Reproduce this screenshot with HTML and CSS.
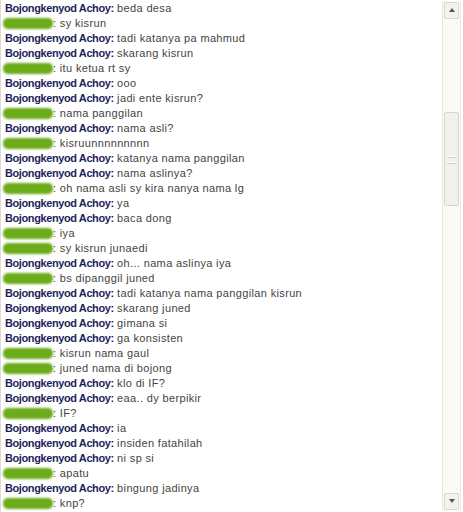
FILE: index.html
```html
<!DOCTYPE html>
<html lang="id">
<head>
  <meta charset="UTF-8">
  <title>Chat</title>
  <link rel="stylesheet" href="styles.css">
</head>
<body>
  <div class="chatbox">
    <div class="log">
      <div class="line"><b class="nick">Bojongkenyod Achoy:</b> beda desa</div>
      <div class="line"><span class="blur"></span>: sy kisrun</div>
      <div class="line"><b class="nick">Bojongkenyod Achoy:</b> tadi katanya pa mahmud</div>
      <div class="line"><b class="nick">Bojongkenyod Achoy:</b> skarang kisrun</div>
      <div class="line"><span class="blur"></span>: itu ketua rt sy</div>
      <div class="line"><b class="nick">Bojongkenyod Achoy:</b> ooo</div>
      <div class="line"><b class="nick">Bojongkenyod Achoy:</b> jadi ente kisrun?</div>
      <div class="line"><span class="blur"></span>: nama panggilan</div>
      <div class="line"><b class="nick">Bojongkenyod Achoy:</b> nama asli?</div>
      <div class="line"><span class="blur"></span>: kisruunnnnnnnnn</div>
      <div class="line"><b class="nick">Bojongkenyod Achoy:</b> katanya nama panggilan</div>
      <div class="line"><b class="nick">Bojongkenyod Achoy:</b> nama aslinya?</div>
      <div class="line"><span class="blur"></span>: oh nama asli sy kira nanya nama lg</div>
      <div class="line"><b class="nick">Bojongkenyod Achoy:</b> ya</div>
      <div class="line"><b class="nick">Bojongkenyod Achoy:</b> baca dong</div>
      <div class="line"><span class="blur"></span>: iya</div>
      <div class="line"><span class="blur"></span>: sy kisrun junaedi</div>
      <div class="line"><b class="nick">Bojongkenyod Achoy:</b> oh... nama aslinya iya</div>
      <div class="line"><span class="blur"></span>: bs dipanggil juned</div>
      <div class="line"><b class="nick">Bojongkenyod Achoy:</b> tadi katanya nama panggilan kisrun</div>
      <div class="line"><b class="nick">Bojongkenyod Achoy:</b> skarang juned</div>
      <div class="line"><b class="nick">Bojongkenyod Achoy:</b> gimana si</div>
      <div class="line"><b class="nick">Bojongkenyod Achoy:</b> ga konsisten</div>
      <div class="line"><span class="blur"></span>: kisrun nama gaul</div>
      <div class="line"><span class="blur"></span>: juned nama di bojong</div>
      <div class="line"><b class="nick">Bojongkenyod Achoy:</b> klo di IF?</div>
      <div class="line"><b class="nick">Bojongkenyod Achoy:</b> eaa.. dy berpikir</div>
      <div class="line"><span class="blur"></span>: IF?</div>
      <div class="line"><b class="nick">Bojongkenyod Achoy:</b> ia</div>
      <div class="line"><b class="nick">Bojongkenyod Achoy:</b> insiden fatahilah</div>
      <div class="line"><b class="nick">Bojongkenyod Achoy:</b> ni sp si</div>
      <div class="line"><span class="blur"></span>: apatu</div>
      <div class="line"><b class="nick">Bojongkenyod Achoy:</b> bingung jadinya</div>
      <div class="line"><span class="blur"></span>: knp?</div>
    </div>

    <!-- scrollbar drawn by hand -->
    <div class="scrollbar">
      <div class="arrow up"></div>
      <div class="track">
        <div class="thumb"><span class="grip"></span></div>
      </div>
      <div class="arrow down"></div>
    </div>
  </div>
</body>
</html>
```

FILE: styles.css
```css
body {
  margin: 0;
  background: #fff;
}
.chatbox {
  display: flex;
  width: 463px;
  height: 512px;
  border-left: 1px solid #dcdcdc;
  box-sizing: border-box;
}
.log {
  flex: 1;
  padding: 1px 0 0 4px;
  font-family: "Liberation Sans", Arial, sans-serif;
  font-size: 11px;
  letter-spacing: 0.35px;
  color: #444;
}
.line {
  height: 15px;
  line-height: 15px;
  white-space: nowrap;
}
.nick {
  color: #1d1f5c;
  letter-spacing: -0.4px;
}
.blur {
  display: inline-block;
  width: 50px;
  height: 11px;
  margin-left: -2px;
  vertical-align: -2px;
  background: #6cab1a;
  border-radius: 5px;
  filter: blur(1px);
}
.scrollbar {
  width: 17px;
  margin: 1px 2px 1px 0;
  display: flex;
  flex-direction: column;
  background: #fbfbf6;
  border-left: 1px solid #e8e8e0;
  border-right: 1px solid #e8e8e0;
}
.arrow {
  height: 17px;
  margin: 1px;
  background: #f3f3ee;
  border: 1px solid #d8d8d0;
  border-radius: 2px;
  box-sizing: border-box;
  position: relative;
}
.arrow::after {
  content: "";
  position: absolute;
  left: 4px;
  top: 5px;
  border-left: 3px solid transparent;
  border-right: 3px solid transparent;
}
.arrow.up::after {
  border-bottom: 4px solid #555;
}
.arrow.down::after {
  border-top: 4px solid #555;
}
.track {
  flex: 1;
  padding-top: 92px;
}
.thumb {
  height: 94px;
  margin: 0 1px;
  background: #f1f1ec;
  border: 1px solid #d6d6cf;
  border-radius: 2px;
  box-sizing: border-box;
  display: flex;
  align-items: center;
  justify-content: center;
}
.grip {
  width: 9px;
  height: 5px;
  border-top: 1px solid #fff;
  border-bottom: 1px solid #fff;
  box-shadow: inset 0 2px 0 -1px #d0d0c8, 0 1px 0 #d0d0c8;
}
```
